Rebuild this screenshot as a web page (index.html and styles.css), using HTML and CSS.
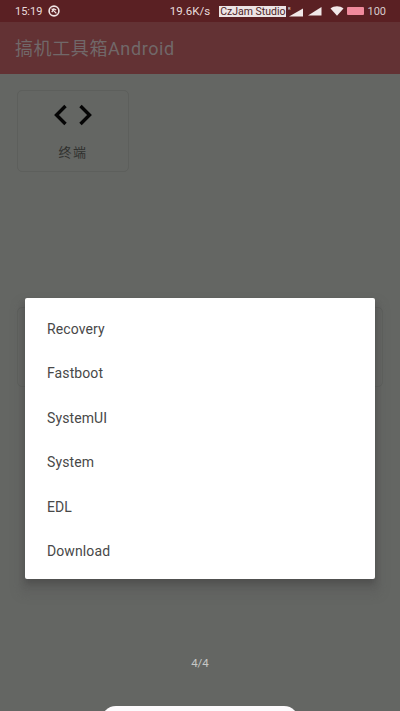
FILE: index.html
```html
<!DOCTYPE html>
<html lang="zh">
<head>
<meta charset="utf-8">
<title>搞机工具箱Android</title>
<link rel="stylesheet" href="styles.css">
</head>
<body>
<div class="screen">
  <header class="status">
    <div class="status-left">
      <span>15:19</span>
      <svg class="sync" viewBox="0 0 12 12" width="12" height="12"><circle cx="6" cy="6" r="4.900" fill="none" stroke="#efe4e4" stroke-width="1.600"/><path d="M3.600 3.600 8.400 8.400M3.800 7.200 5.800 3.800 8.200 5" fill="none" stroke="#efe4e4" stroke-width="1.300"/></svg>
    </div>
    <div class="status-right">
      <span class="speed">19.6K/s</span>
      <span class="tag">CzJam Studio</span>
      <svg class="sig" viewBox="0 0 16 11" width="16" height="11"><text class="sig-r" x="0" y="4">R</text><path d="M1 10.500 15 2.500V10.500Z" fill="#f1e8e8"/></svg>
      <svg class="sig2" viewBox="0 0 14 10" width="14" height="10"><path d="M0 9.500 13.500 1V9.500Z" fill="#f1e8e8"/></svg>
      <svg class="wifi" viewBox="0 0 14 10" width="14" height="10"><path d="M0.500 2.500C4 -0.500 10 -0.500 13.500 2.500L7 9.800Z" fill="#f1e8e8"/></svg>
      <span class="batt"></span>
      <span class="level">100</span>
    </div>
  </header>
  <div class="appbar">搞机工具箱Android</div>
  <main class="content">
    <section class="card card-top">
      <svg class="code" viewBox="0 0 38 22" width="38" height="22"><path d="M11.500 2 2.500 11l9 9M26.500 2l9 9-9 9" fill="none" stroke="#050505" stroke-width="3.400"/></svg>
      <span class="card-label">终端</span>
    </section>
    <section class="card card-wide"></section>
  </main>
  <div class="pager">4/4</div>
  <div class="pill"></div>
  <div class="menu">
    <div class="menu-item">Recovery</div>
    <div class="menu-item">Fastboot</div>
    <div class="menu-item">SystemUI</div>
    <div class="menu-item">System</div>
    <div class="menu-item">EDL</div>
    <div class="menu-item">Download</div>
  </div>
</div>
</body>
</html>
```
FILE: styles.css
```css
* { box-sizing: border-box; }
html, body { margin: 0; padding: 0; }
body { font-family: Roboto, "Noto Sans CJK SC", sans-serif; }
.screen {
  position: relative;
  width: 400px;
  height: 711px;
  overflow: hidden;
  background: #646663;
  display: flex;
  flex-direction: column;
}
.status {
  height: 22px;
  background: #5a2023;
  color: #e8dcdc;
  font-size: 11px;
  display: flex;
  align-items: center;
  justify-content: space-between;
  padding: 0 14px 0 15px;
}
.status-left { display: flex; align-items: center; gap: 6px; }
.status-right { display: flex; align-items: center; }
.speed { margin-right: 9px; font-size: 11.5px; }
.tag {
  background: #ece4e4;
  color: #4c2326;
  font-size: 10.5px;
  line-height: 11px;
  height: 11px;
  padding: 0 1px;
  margin-right: 2px;
  white-space: nowrap;
}
.sig { margin-right: 4px; }
.sig-r { font-size: 4px; fill: #f1e8e8; }
.sig2 { margin-right: 8px; }
.wifi { margin-right: 3px; }
.batt {
  width: 17px;
  height: 8px;
  background: #f08a9c;
  border-radius: 1px;
  margin-right: 3px;
}
.level { font-size: 11px; color: #d8cccc; }
.appbar {
  height: 52px;
  background: #633234;
  color: #716869;
  font-size: 18px;
  letter-spacing: 0.6px;
  line-height: 54px;
  padding-left: 15px;
}
.content { flex: 1; padding: 16px 17px 0; display: flex; flex-direction: column; }
.card {
  border: 1px solid #5d5f5c;
  border-radius: 5px;
  background: #646663;
}
.card-top {
  width: 112px;
  height: 82px;
  display: flex;
  flex-direction: column;
  align-items: center;
  padding-top: 13px;
}
.code { margin-bottom: 18px; }
.card-label { color: #2f302e; font-size: 13px; line-height: 18px; letter-spacing: 1.500px; }
.card-wide { height: 80px; margin-top: 135px; }
.pager {
  position: absolute;
  left: 0;
  right: 0;
  top: 656px;
  text-align: center;
  color: #c6c7c5;
  font-size: 11.5px;
}
.pill {
  position: absolute;
  left: 101px;
  top: 706px;
  width: 198px;
  height: 30px;
  background: #fdfbfd;
  border-radius: 15px;
}
.menu {
  position: absolute;
  left: 25px;
  top: 298px;
  width: 350px;
  height: 281px;
  padding: 9px 0 7px;
  background: #fff;
  border-radius: 2px;
  box-shadow: 0 5px 6px rgba(50, 50, 50, 0.35), 0 10px 8px 6px rgba(90, 88, 88, 0.35);
}
.menu-item {
  height: 44.4px;
  line-height: 44.4px;
  padding-left: 22px;
  color: #484848;
  font-size: 14px;
  letter-spacing: 0.1px;
}
```
